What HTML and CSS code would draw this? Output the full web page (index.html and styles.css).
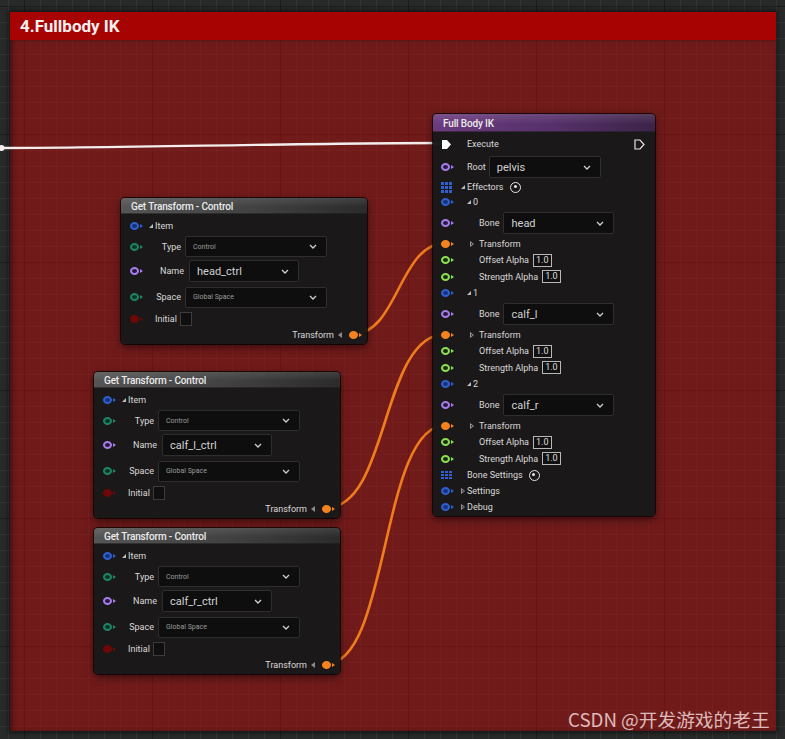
FILE: index.html
```html
<!DOCTYPE html>
<html>
<head>
<meta charset="utf-8">
<title>Fullbody IK</title>
<link rel="stylesheet" href="styles.css">
</head>
<body>
<div class="graph">
  <div class="comment">
    <div class="comment-title">4.Fullbody IK</div>
    <div class="comment-body"></div>
  </div>

  <svg class="wires" width="785" height="739" viewBox="0 0 785 739">
    <path d="M0 148 C120 148 300 143 441 143" stroke="#f3eded" stroke-width="2.4" fill="none"/>
    <circle cx="1.5" cy="148" r="3" fill="#f3eded"/>
    <path d="M353 334 C398 334 399 243 446 243" stroke="#f07d1c" stroke-width="2.6" fill="none"/>
    <path d="M326 508 C390 508 380 334 446 334" stroke="#f07d1c" stroke-width="2.6" fill="none"/>
    <path d="M326 664 C390 664 380 425 446 425" stroke="#f07d1c" stroke-width="2.6" fill="none"/>
  </svg>

  <!-- Full Body IK -->
  <div class="node fbik">
    <div class="node-head">Full Body IK</div>
    <div class="node-body">
      <div class="row h20">
        <span class="pincell"><svg class="exec" width="11" height="11" viewBox="0 0 11 11"><path d="M1 1H6L10 5.5L6 10H1Z" fill="#ffffff"/></svg></span>
        <span class="lbl">Execute</span>
        <span class="grow"></span>
        <svg class="exec" width="11" height="11" viewBox="0 0 11 11"><path d="M1 1H6L10 5.5L6 10H1Z" fill="none" stroke="#e8e8e8" stroke-width="1.2"/></svg>
      </div>
      <div class="row h26">
        <span class="pincell"><span class="pin c-purple"></span></span>
        <span class="lbl">Root</span>
        <div class="dd dd-root"><span class="dd-text">pelvis</span><svg class="chev" width="8" height="5" viewBox="0 0 8 5"><path d="M1 1L4 4L7 1" fill="none" stroke="#cfcfcf" stroke-width="1.3"/></svg></div>
      </div>
      <div class="row h14">
        <span class="pincell"><span class="arr-icon"><i></i><i></i><i></i><i></i><i></i><i></i><i></i><i></i><i></i></span></span>
        <span class="tri-down tri-neg"></span>
        <span class="lbl">Effectors</span>
        <span class="add add-eff"></span>
      </div>

      <div class="row h16">
        <span class="pincell"><span class="pin c-blue"></span></span>
        <span class="tri-down"></span><span class="lbl">0</span>
      </div>
      <div class="row h26">
        <span class="pincell"><span class="pin c-purple"></span></span>
        <span class="lbl ind">Bone</span>
        <div class="dd dd-bone"><span class="dd-text">head</span><svg class="chev" width="8" height="5" viewBox="0 0 8 5"><path d="M1 1L4 4L7 1" fill="none" stroke="#cfcfcf" stroke-width="1.3"/></svg></div>
      </div>
      <div class="row h16">
        <span class="pincell"><span class="pin c-orange"></span></span>
        <span class="tri-right"></span><span class="lbl">Transform</span>
      </div>
      <div class="row h16h">
        <span class="pincell"><span class="pin c-green"></span></span>
        <span class="lbl ind">Offset Alpha</span><span class="val">1.0</span>
      </div>
      <div class="row h16h">
        <span class="pincell"><span class="pin c-green"></span></span>
        <span class="lbl ind">Strength Alpha</span><span class="val">1.0</span>
      </div>

      <div class="row h16">
        <span class="pincell"><span class="pin c-blue"></span></span>
        <span class="tri-down"></span><span class="lbl">1</span>
      </div>
      <div class="row h26">
        <span class="pincell"><span class="pin c-purple"></span></span>
        <span class="lbl ind">Bone</span>
        <div class="dd dd-bone"><span class="dd-text">calf_l</span><svg class="chev" width="8" height="5" viewBox="0 0 8 5"><path d="M1 1L4 4L7 1" fill="none" stroke="#cfcfcf" stroke-width="1.3"/></svg></div>
      </div>
      <div class="row h16">
        <span class="pincell"><span class="pin c-orange"></span></span>
        <span class="tri-right"></span><span class="lbl">Transform</span>
      </div>
      <div class="row h16h">
        <span class="pincell"><span class="pin c-green"></span></span>
        <span class="lbl ind">Offset Alpha</span><span class="val">1.0</span>
      </div>
      <div class="row h16h">
        <span class="pincell"><span class="pin c-green"></span></span>
        <span class="lbl ind">Strength Alpha</span><span class="val">1.0</span>
      </div>

      <div class="row h16">
        <span class="pincell"><span class="pin c-blue"></span></span>
        <span class="tri-down"></span><span class="lbl">2</span>
      </div>
      <div class="row h26">
        <span class="pincell"><span class="pin c-purple"></span></span>
        <span class="lbl ind">Bone</span>
        <div class="dd dd-bone"><span class="dd-text">calf_r</span><svg class="chev" width="8" height="5" viewBox="0 0 8 5"><path d="M1 1L4 4L7 1" fill="none" stroke="#cfcfcf" stroke-width="1.3"/></svg></div>
      </div>
      <div class="row h16">
        <span class="pincell"><span class="pin c-orange"></span></span>
        <span class="tri-right"></span><span class="lbl">Transform</span>
      </div>
      <div class="row h16h">
        <span class="pincell"><span class="pin c-green"></span></span>
        <span class="lbl ind">Offset Alpha</span><span class="val">1.0</span>
      </div>
      <div class="row h16h">
        <span class="pincell"><span class="pin c-green"></span></span>
        <span class="lbl ind">Strength Alpha</span><span class="val">1.0</span>
      </div>

      <div class="row h16">
        <span class="pincell"><span class="arr-icon arr-wide"><i></i><i></i><i></i><i></i><i></i><i></i><i></i><i></i><i></i></span></span>
        <span class="lbl">Bone Settings</span>
        <span class="add add-bs"></span>
      </div>
      <div class="row h16">
        <span class="pincell"><span class="pin c-blue"></span></span>
        <span class="tri-right tri-neg2"></span><span class="lbl">Settings</span>
      </div>
      <div class="row h16">
        <span class="pincell"><span class="pin c-blue"></span></span>
        <span class="tri-right tri-neg2"></span><span class="lbl">Debug</span>
      </div>
    </div>
  </div>

  <!-- Get Transform 1 -->
  <div class="node gt gt1">
    <div class="node-head">Get Transform - Control</div>
    <div class="node-body">
      <div class="row h18">
        <span class="pincell"><span class="pin c-blue"></span></span>
        <span class="tri-down tri-neg"></span><span class="lbl">Item</span>
      </div>
      <div class="row h23">
        <span class="pincell"><span class="pin c-teal"></span></span>
        <span class="lbl rlbl">Type</span>
        <div class="dd dd-wide"><span class="dd-small">Control</span><svg class="chev" width="8" height="5" viewBox="0 0 8 5"><path d="M1 1L4 4L7 1" fill="none" stroke="#cfcfcf" stroke-width="1.3"/></svg></div>
      </div>
      <div class="row h26">
        <span class="pincell"><span class="pin c-purple"></span></span>
        <span class="lbl rlbl rlbl-name">Name</span>
        <div class="dd dd-name"><span class="dd-text">head_ctrl</span><svg class="chev" width="8" height="5" viewBox="0 0 8 5"><path d="M1 1L4 4L7 1" fill="none" stroke="#cfcfcf" stroke-width="1.3"/></svg></div>
      </div>
      <div class="row h26">
        <span class="pincell"><span class="pin c-teal"></span></span>
        <span class="lbl rlbl">Space</span>
        <div class="dd dd-wide"><span class="dd-small">Global Space</span><svg class="chev" width="8" height="5" viewBox="0 0 8 5"><path d="M1 1L4 4L7 1" fill="none" stroke="#cfcfcf" stroke-width="1.3"/></svg></div>
      </div>
      <div class="row h18">
        <span class="pincell"><span class="pin c-red"></span></span>
        <span class="lbl">Initial</span><span class="check"></span>
      </div>
      <div class="row h14 out">
        <span class="lbl">Transform</span><span class="tri-left"></span><span class="pin c-orange"></span>
      </div>
    </div>
  </div>

  <!-- Get Transform 2 -->
  <div class="node gt gt2">
    <div class="node-head">Get Transform - Control</div>
    <div class="node-body">
      <div class="row h18">
        <span class="pincell"><span class="pin c-blue"></span></span>
        <span class="tri-down tri-neg"></span><span class="lbl">Item</span>
      </div>
      <div class="row h23">
        <span class="pincell"><span class="pin c-teal"></span></span>
        <span class="lbl rlbl">Type</span>
        <div class="dd dd-wide"><span class="dd-small">Control</span><svg class="chev" width="8" height="5" viewBox="0 0 8 5"><path d="M1 1L4 4L7 1" fill="none" stroke="#cfcfcf" stroke-width="1.3"/></svg></div>
      </div>
      <div class="row h26">
        <span class="pincell"><span class="pin c-purple"></span></span>
        <span class="lbl rlbl rlbl-name">Name</span>
        <div class="dd dd-name"><span class="dd-text">calf_l_ctrl</span><svg class="chev" width="8" height="5" viewBox="0 0 8 5"><path d="M1 1L4 4L7 1" fill="none" stroke="#cfcfcf" stroke-width="1.3"/></svg></div>
      </div>
      <div class="row h26">
        <span class="pincell"><span class="pin c-teal"></span></span>
        <span class="lbl rlbl">Space</span>
        <div class="dd dd-wide"><span class="dd-small">Global Space</span><svg class="chev" width="8" height="5" viewBox="0 0 8 5"><path d="M1 1L4 4L7 1" fill="none" stroke="#cfcfcf" stroke-width="1.3"/></svg></div>
      </div>
      <div class="row h18">
        <span class="pincell"><span class="pin c-red"></span></span>
        <span class="lbl">Initial</span><span class="check"></span>
      </div>
      <div class="row h14 out">
        <span class="lbl">Transform</span><span class="tri-left"></span><span class="pin c-orange"></span>
      </div>
    </div>
  </div>

  <!-- Get Transform 3 -->
  <div class="node gt gt3">
    <div class="node-head">Get Transform - Control</div>
    <div class="node-body">
      <div class="row h18">
        <span class="pincell"><span class="pin c-blue"></span></span>
        <span class="tri-down tri-neg"></span><span class="lbl">Item</span>
      </div>
      <div class="row h23">
        <span class="pincell"><span class="pin c-teal"></span></span>
        <span class="lbl rlbl">Type</span>
        <div class="dd dd-wide"><span class="dd-small">Control</span><svg class="chev" width="8" height="5" viewBox="0 0 8 5"><path d="M1 1L4 4L7 1" fill="none" stroke="#cfcfcf" stroke-width="1.3"/></svg></div>
      </div>
      <div class="row h26">
        <span class="pincell"><span class="pin c-purple"></span></span>
        <span class="lbl rlbl rlbl-name">Name</span>
        <div class="dd dd-name"><span class="dd-text">calf_r_ctrl</span><svg class="chev" width="8" height="5" viewBox="0 0 8 5"><path d="M1 1L4 4L7 1" fill="none" stroke="#cfcfcf" stroke-width="1.3"/></svg></div>
      </div>
      <div class="row h26">
        <span class="pincell"><span class="pin c-teal"></span></span>
        <span class="lbl rlbl">Space</span>
        <div class="dd dd-wide"><span class="dd-small">Global Space</span><svg class="chev" width="8" height="5" viewBox="0 0 8 5"><path d="M1 1L4 4L7 1" fill="none" stroke="#cfcfcf" stroke-width="1.3"/></svg></div>
      </div>
      <div class="row h18">
        <span class="pincell"><span class="pin c-red"></span></span>
        <span class="lbl">Initial</span><span class="check"></span>
      </div>
      <div class="row h14 out">
        <span class="lbl">Transform</span><span class="tri-left"></span><span class="pin c-orange"></span>
      </div>
    </div>
  </div>

  <div class="watermark">CSDN @开发游戏的老王</div>
</div>
</body>
</html>
```

FILE: styles.css
```css
* { box-sizing: border-box; }
html, body { margin: 0; padding: 0; }
body {
  width: 785px;
  height: 739px;
  overflow: hidden;
  background: #262626;
  font-family: Roboto, "Noto Sans", sans-serif;
  color: #dcdcdc;
}

.graph {
  position: relative;
  width: 785px;
  height: 739px;
  padding: 12px 9px 8px 10px;
  background-color: #282a2a;
  background-image:
    linear-gradient(90deg, rgba(0,0,0,0.45) 1px, transparent 1px),
    linear-gradient(rgba(0,0,0,0.45) 1px, transparent 1px),
    linear-gradient(90deg, rgba(255,255,255,0.05) 1px, transparent 1px),
    linear-gradient(rgba(255,255,255,0.05) 1px, transparent 1px);
  background-size: 128px 128px, 128px 128px, 16px 16px, 16px 16px;
  background-position: 24px 6px, 24px 6px, 8px 6px, 8px 6px;
}

.comment {
  height: 100%;
  display: flex;
  flex-direction: column;
  box-shadow: 0 0 4px 2px rgba(0,0,0,0.5);
}
.comment-title {
  height: 28px;
  flex: none;
  background: #a80303;
  color: #f4f0f0;
  font-weight: 700;
  font-size: 17px;
  line-height: 29px;
  padding-left: 10px;
}
.comment-body {
  flex: 1;
  background: rgba(172, 12, 12, 0.55);
  box-shadow: inset 3px 0 4px rgba(0,0,0,0.35);
}

.wires {
  position: absolute;
  left: 0;
  top: 0;
}

.node {
  position: absolute;
  background: rgba(24, 24, 24, 0.98);
  border-radius: 4px;
  box-shadow: 0 0 0 1px rgba(0,0,0,0.7), 0 3px 8px rgba(0,0,0,0.55);
  overflow: hidden;
}
.fbik { left: 433px; top: 114px; width: 222px; }
.gt { width: 246px; }
.gt1 { left: 121px; top: 198px; }
.gt2 { left: 94px; top: 372px; }
.gt3 { left: 94px; top: 528px; }

.node-head {
  height: 18px;
  line-height: 18px;
  font-size: 10px;
  font-weight: 500;
  color: #ececec;
  padding: 1px 0 0 10px;
  letter-spacing: -0.15px;
  border-bottom: 1px solid rgba(0,0,0,0.5);
}
.fbik .node-head {
  line-height: 17px;
  background: linear-gradient(180deg, rgba(255,255,255,0.12), rgba(255,255,255,0) 60%),
              linear-gradient(90deg, #6c3b7e 0%, #55306a 55%, #3d2348 100%);
}
.gt .node-head {
  height: 16px;
  line-height: 16px;
  padding-top: 1px;
  line-height: 15px;
  background: linear-gradient(180deg, rgba(255,255,255,0.1), rgba(255,255,255,0) 60%),
              linear-gradient(90deg, #555555 0%, #414141 55%, #2b2b2b 100%);
}

.fbik .node-body { padding: 2px 10px 1px 8px; }
.gt .node-body { padding: 3px 9px 2px 9px; }

.row { display: flex; align-items: center; }
.h14 { height: 14px; }
.h16 { height: 16px; }
.h16h { height: 16.5px; }
.h18 { height: 18px; }
.h20 { height: 20px; }
.h23 { height: 23px; }
.h26 { height: 26px; }
.grow { flex: 1; }

.pincell { width: 26px; flex: none; display: flex; align-items: center; }
.gt .pincell { width: 25px; }

.lbl { font-size: 9px; white-space: nowrap; color: #dadada; }
.ind { margin-left: 12px; }
.rlbl { width: 26px; text-align: right; }
.rlbl-name { width: 29px; }

/* pins */
.pin {
  position: relative;
  display: inline-block;
  width: 9px;
  height: 8px;
  border: 2px solid currentColor;
  border-radius: 50%;
  flex: none;
}
.pin::after {
  content: "";
  position: absolute;
  left: 8px;
  top: 0px;
  border-left: 3px solid currentColor;
  border-top: 2px solid transparent;
  border-bottom: 2px solid transparent;
}
.c-blue { color: #2f5fd0; background: #163377; }
.c-teal { color: #1c8566; background: #0c3326; }
.c-purple { color: #a77ded; background: #26193a; }
.c-green { color: #8de052; background: #182a0e; }
.c-orange { color: #f5831e; background: #f5831e; }
.c-red { color: #6e0808; background: #6e0808; }

.exec { display: block; }

/* triangles */
.tri-down {
  width: 0; height: 0; flex: none;
  border-left: 4px solid transparent;
  border-bottom: 4px solid #bdbdbd;
  margin-right: 2px;
}
.tri-neg { margin-left: -6px; }
.tri-right {
  width: 0; height: 0; flex: none;
  border-left: 4px solid #9a9a9a;
  border-top: 3px solid transparent;
  border-bottom: 3px solid transparent;
  margin-left: 3px;
  margin-right: 5px;
  position: relative;
}
.tri-right::after {
  content: "";
  position: absolute;
  left: -3px;
  top: -1.5px;
  border-left: 2px solid #181818;
  border-top: 1.5px solid transparent;
  border-bottom: 1.5px solid transparent;
}
.tri-neg2 { margin-left: -6px; margin-right: 2px; }
.tri-left {
  width: 0; height: 0; flex: none;
  border-right: 4px solid #8a8a8a;
  border-top: 3px solid transparent;
  border-bottom: 3px solid transparent;
  margin-left: 4px;
  margin-right: 7px;
}

/* icons */
.arr-icon {
  display: grid;
  grid-template-columns: repeat(3, 3px);
  grid-auto-rows: 3px;
  gap: 1px;
}
.arr-wide { grid-template-columns: repeat(3, 3px); grid-auto-rows: 2px; }
.arr-icon i { display: block; background: #2f5fd0; }
.add {
  display: inline-block;
  width: 11px;
  height: 11px;
  border: 1.5px solid #e6e6e6;
  border-radius: 50%;
  position: relative;
  flex: none;
}
.add::after {
  content: "";
  position: absolute;
  left: 2.5px;
  top: 2.5px;
  width: 3px;
  height: 3px;
  border-radius: 50%;
  background: #e6e6e6;
}
.add-eff { margin-left: 7px; }
.add-bs { margin-left: 6px; }

/* dropdowns */
.dd {
  display: flex;
  align-items: center;
  justify-content: space-between;
  height: 22px;
  background: #0e0e0e;
  border: 1px solid #2e2e2e;
  border-radius: 2px;
  padding: 0 9px 0 7px;
  flex: none;
}
.dd-root { width: 112px; margin-left: 3px; }
.dd-bone { width: 111px; margin-left: 4px; }
.dd-wide { width: 142px; height: 21px; margin-left: 4px; }
.dd-name { width: 110px; margin-left: 5px; }
.dd-text { font-size: 11px; color: #d2d2d2; }
.dd-small { font-size: 7px; color: #9c9c9c; }
.chev { display: block; }

.val {
  font-size: 9px;
  height: 13px;
  line-height: 11px;
  padding: 0 2px;
  border: 1px solid #b8b8b8;
  background: #111;
  color: #dedede;
  margin-left: 4px;
}

.check {
  width: 12px;
  height: 14px;
  border: 1px solid #3c3c3c;
  background: #0f0f0f;
  margin-left: 3px;
}

.out { justify-content: flex-end; }

.watermark {
  position: absolute;
  left: 568px;
  top: 706px;
  font-family: "Noto Sans CJK SC", "Noto Sans", sans-serif;
  font-size: 18.7px;
  line-height: 26px;
  color: rgba(255, 232, 232, 0.78);
  white-space: nowrap;
}
```
